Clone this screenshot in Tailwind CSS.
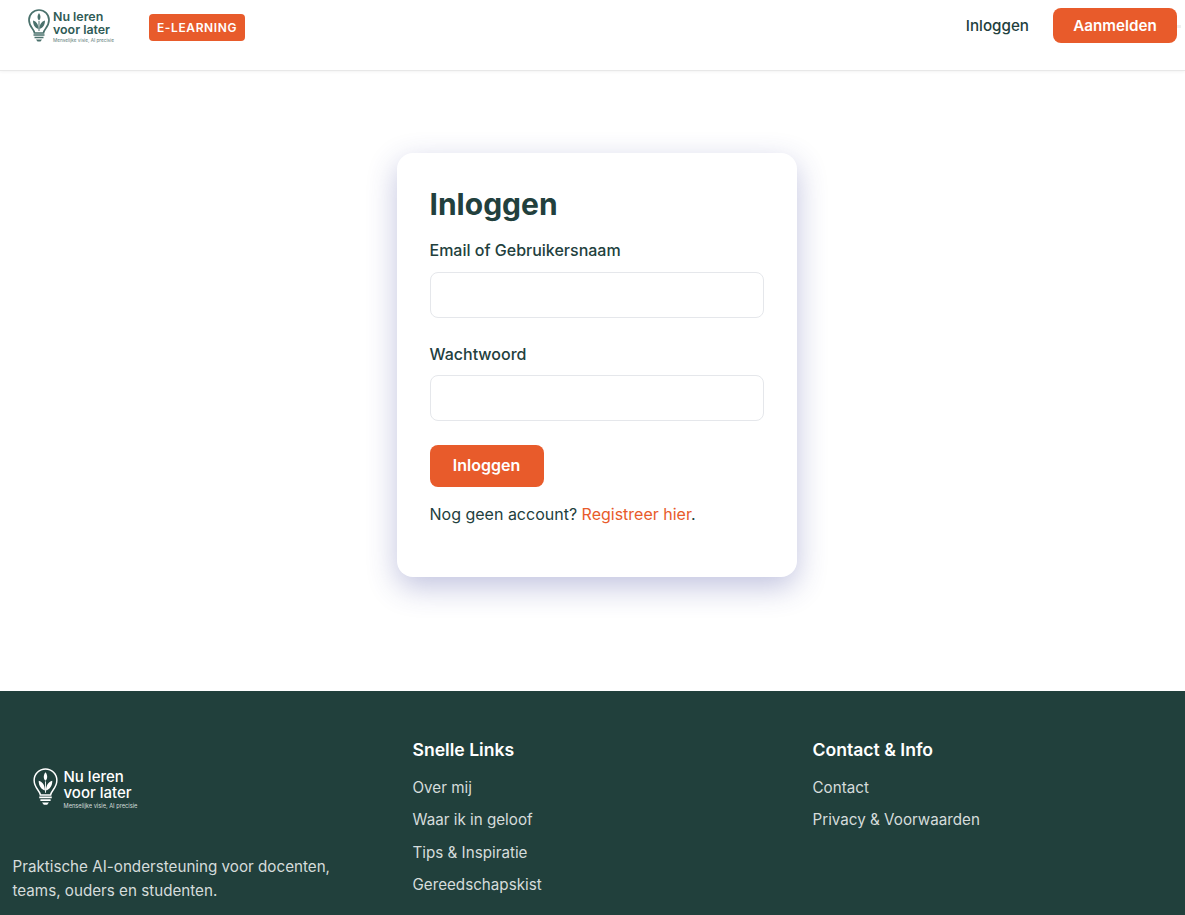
<!DOCTYPE html>
<html lang="nl">
<head>
    <meta charset="UTF-8">
    <meta name="viewport" content="width=device-width, initial-scale=1.0">
    <title>Inloggen</title>
    <script src="https://cdn.jsdelivr.net/npm/@tailwindcss/browser@4"></script>
</head>
<body class="bg-white font-['Inter',sans-serif] text-base text-[#22403d] h-[915px] overflow-hidden">
    <!-- Header -->
    <header class="relative h-[71px] bg-white border-b border-[#e8e8e8] shadow-[0_1px_3px_rgba(0,0,0,0.05)] flex justify-between items-start pl-7 pr-2">
        <div class="flex items-start">
            <a href="#" class="flex items-start gap-[3px] pt-[9px] w-[85px]">
                <svg class="w-[22px] h-[33px] shrink-0" viewBox="0 0 22 33" fill="none">
                    <path d="M6.500 24c0-3.500-5.500-6-5.500-13a10 10 0 0 1 20 0c0 7-5.500 9.500-5.500 13z" stroke="#4a716c" stroke-width="1.700"/>
                    <path d="M11 22V12" stroke="#4a716c" stroke-width="1"/>
                    <path d="M10.500 20c-3-.8-5.500-3.500-5.500-8.500 3.500 1 5.500 4 5.500 8.500zM11.500 20c3-.8 5.500-3.500 5.500-8.500-3.500 1-5.500 4-5.500 8.500zM11 11.500c-2-1.800-2-5 0-7.500 2 2.500 2 5.700 0 7.500z" fill="#4a716c"/>
                    <path d="M5.500 26h11M6.500 28.500h9" stroke="#4a716c" stroke-width="1.700"/>
                    <path d="M8 30.500h6l-1.500 2h-3z" fill="#4a716c"/>
                </svg>
                <div class="flex flex-col whitespace-nowrap pt-[1px]">
                    <span class="text-[12.4px] leading-[13px] font-semibold text-[#2f5b56]">Nu leren<br>voor later</span>
                    <span class="text-[4.700px] leading-[6px] mt-[1px] text-[#5c7d79]">Menselijke visie, AI precisie</span>
                </div>
            </a>
            <span class="ml-9 mt-[14px] h-[27px] px-2 flex items-center bg-[#e85b2b] text-white text-xs font-semibold tracking-[0.6px] rounded">E-LEARNING</span>
        </div>
        <nav class="flex items-center pt-2 gap-6">
            <a href="#" class="text-[15.2px] font-medium text-[#22403d] mt-[1px]">Inloggen</a>
            <a href="#" class="h-[35px] w-[124px] pt-[1px] flex items-center justify-center bg-[#e85b2b] text-white text-[15.2px] font-semibold rounded-lg">Aanmelden</a>
        </nav>
        <span class="absolute right-1 top-[25px] w-1 h-[3px] bg-[#f0f0f0]"></span>
    </header>

    <!-- Login -->
    <main class="h-[620px] flex justify-center pt-[82px] pl-2">
        <div class="w-[400px] h-[424px] bg-white rounded-2xl px-[33px] pt-8 shadow-[0_10px_30px_rgba(50,55,150,0.3)]">
            <h1 class="text-[30px] leading-[38px] font-bold text-[#22403d]">Inloggen</h1>
            <form>
                <label class="block mt-[15px] leading-[24px] font-medium text-[#22403d]">Email of Gebruikersnaam</label>
                <input type="text" class="block w-full h-[46px] mt-[10px] border border-[#e5e7eb] rounded-lg bg-white">
                <label class="block mt-6 leading-[24px] font-medium text-[#22403d]">Wachtwoord</label>
                <input type="password" class="block w-full h-[46px] mt-[9px] border border-[#e5e7eb] rounded-lg bg-white">
                <button type="button" class="block mt-6 w-[114px] h-[42px] pb-[3px] bg-[#e85b2b] text-white font-semibold rounded-lg">Inloggen</button>
            </form>
            <p class="mt-[15px] leading-[24px]">Nog geen account? <a href="#" class="text-[#e85b2b]">Registreer hier</a>.</p>
        </div>
    </main>

    <!-- Footer -->
    <footer class="bg-[#21403c] text-[#d5dcdb] h-[224px] grid grid-cols-[400px_400px_1fr] pl-[12.5px] pt-[47px] text-[15.2px]">
        <div>
            <a href="#" class="flex items-start gap-[6px] ml-5 mt-[30px] h-[40px]">
                <svg class="w-[25px] h-[39px] shrink-0 -mt-[1px]" viewBox="0 0 22 33" fill="none">
                    <path d="M6.500 24c0-3.500-5.500-6-5.500-13a10 10 0 0 1 20 0c0 7-5.500 9.500-5.500 13z" stroke="#fff" stroke-width="1.300"/>
                    <path d="M11 22V12" stroke="#fff" stroke-width=".8"/>
                    <path d="M10.500 20c-3-.8-5.500-3.500-5.500-8.500 3.500 1 5.500 4 5.500 8.500zM11.500 20c3-.8 5.500-3.500 5.500-8.500-3.500 1-5.500 4-5.500 8.500zM11 11.500c-2-1.800-2-5 0-7.500 2 2.500 2 5.700 0 7.500z" fill="#fff"/>
                    <path d="M5.500 26h11M6.500 28.500h9" stroke="#fff" stroke-width="1.500"/>
                    <path d="M8 30.500h6l-1.500 2h-3z" fill="#fff"/>
                </svg>
                <div class="flex flex-col whitespace-nowrap pt-[1px]">
                    <span class="text-[15px] leading-[16px] font-medium text-white">Nu leren</span>
                    <span class="text-[15px] leading-[16px] font-medium text-white">voor later</span>
                    <span class="text-[5.700px] leading-[7px] mt-[1px] text-[#d5dcdb]">Menselijke visie, AI precisie</span>
                </div>
            </a>
            <p class="mt-[47px] leading-[24px] w-[340px]">Praktische AI-ondersteuning voor docenten, teams, ouders en studenten.</p>
        </div>
        <div>
            <h3 class="text-[17.6px] leading-6 font-semibold text-white">Snelle Links</h3>
            <ul class="mt-[14px] flex flex-col gap-2 leading-[24.4px]">
                <li><a href="#">Over mij</a></li>
                <li><a href="#">Waar ik in geloof</a></li>
                <li><a href="#">Tips &amp; Inspiratie</a></li>
                <li><a href="#">Gereedschapskist</a></li>
            </ul>
        </div>
        <div>
            <h3 class="text-[17.6px] leading-6 font-semibold text-white">Contact &amp; Info</h3>
            <ul class="mt-[14px] flex flex-col gap-2 leading-[24.4px]">
                <li><a href="#">Contact</a></li>
                <li><a href="#">Privacy &amp; Voorwaarden</a></li>
            </ul>
        </div>
    </footer>
</body>
</html>
